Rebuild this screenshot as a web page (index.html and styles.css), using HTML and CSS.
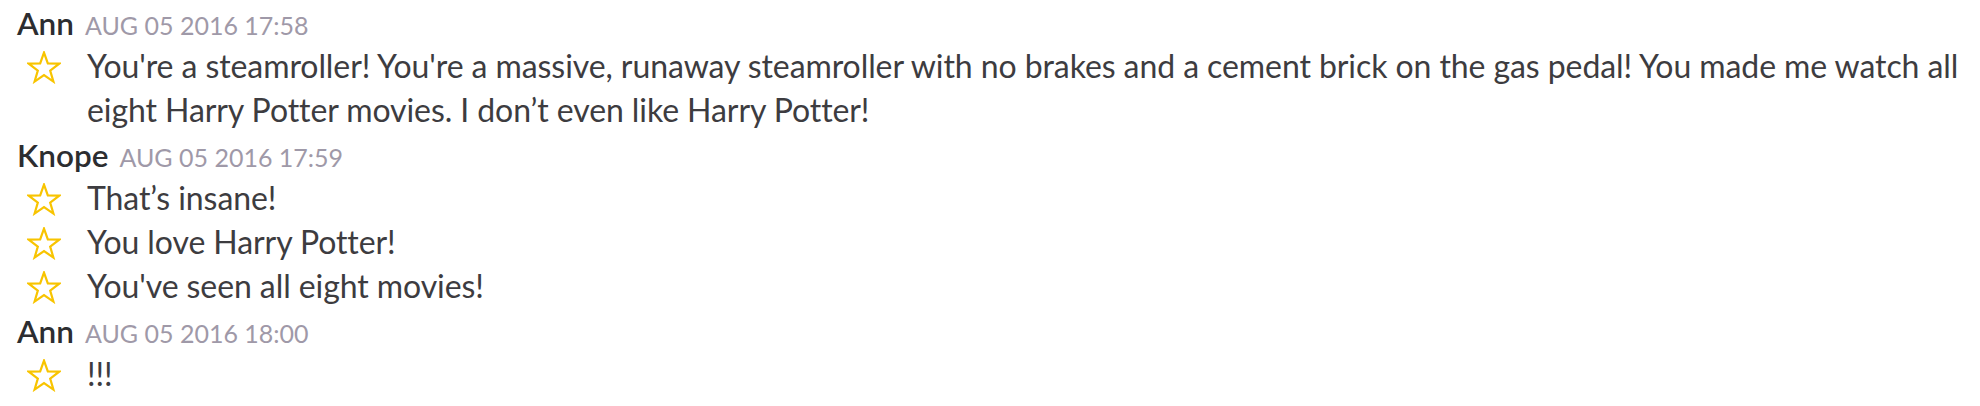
FILE: index.html
```html
<!DOCTYPE html>
<html lang="en">
<head>
<meta charset="utf-8">
<title>Chat log</title>
<link rel="stylesheet" href="styles.css">
</head>
<body>
<div class="log">
  <div class="head"><span class="name">Ann</span><span class="time">AUG 05 2016 17:58</span></div>
  <div class="msg">
    <svg class="star" viewBox="0 0 34 33" width="34" height="33"><polygon points="17,1.6 20.82,12.34 32.22,12.66 23.18,19.61 26.4,30.54 17,24.1 7.6,30.54 10.82,19.61 1.78,12.66 13.18,12.34"/></svg>
    <div class="text">You're a steamroller! You're a massive, runaway steamroller with no brakes and a cement brick on the gas pedal! You made me watch all eight Harry Potter movies. I don’t even like Harry Potter!</div>
  </div>
  <div class="head"><span class="name">Knope</span><span class="time">AUG 05 2016 17:59</span></div>
  <div class="msg">
    <svg class="star" viewBox="0 0 34 33" width="34" height="33"><polygon points="17,1.6 20.82,12.34 32.22,12.66 23.18,19.61 26.4,30.54 17,24.1 7.6,30.54 10.82,19.61 1.78,12.66 13.18,12.34"/></svg>
    <div class="text">That’s insane!</div>
  </div>
  <div class="msg">
    <svg class="star" viewBox="0 0 34 33" width="34" height="33"><polygon points="17,1.6 20.82,12.34 32.22,12.66 23.18,19.61 26.4,30.54 17,24.1 7.6,30.54 10.82,19.61 1.78,12.66 13.18,12.34"/></svg>
    <div class="text">You love Harry Potter!</div>
  </div>
  <div class="msg">
    <svg class="star" viewBox="0 0 34 33" width="34" height="33"><polygon points="17,1.6 20.82,12.34 32.22,12.66 23.18,19.61 26.4,30.54 17,24.1 7.6,30.54 10.82,19.61 1.78,12.66 13.18,12.34"/></svg>
    <div class="text">You've seen all eight movies!</div>
  </div>
  <div class="head"><span class="name">Ann</span><span class="time">AUG 05 2016 18:00</span></div>
  <div class="msg">
    <svg class="star" viewBox="0 0 34 33" width="34" height="33"><polygon points="17,1.6 20.82,12.34 32.22,12.66 23.18,19.61 26.4,30.54 17,24.1 7.6,30.54 10.82,19.61 1.78,12.66 13.18,12.34"/></svg>
    <div class="text">!!!</div>
  </div>
</div>
</body>
</html>
```

FILE: styles.css
```css
html, body {
  margin: 0;
  padding: 0;
  background: #ffffff;
}

body {
  font-family: Lato, "Liberation Sans", sans-serif;
  color: #2c2d30;
}

.log {
  padding: 0 8px 0 17px;
}

.head {
  box-sizing: border-box;
  height: 44px;
  padding-top: 1px;
  line-height: 43px;
  font-size: 32px;
  white-space: nowrap;
}

.name {
  font-size: 31.5px;
  font-weight: 600;
  color: #2c2d30;
}

.time {
  margin-left: 11px;
  font-size: 25px;
  color: #9f99a8;
}

.msg {
  display: grid;
  grid-template-columns: 60px 1fr;
  padding-left: 10px;
}

.star {
  display: block;
  margin-top: 7px;
  fill: none;
  stroke: #f8c400;
  stroke-width: 2.2;
  stroke-linejoin: miter;
}

.text {
  font-size: 32px;
  line-height: 44px;
  letter-spacing: -0.08px;
  color: #3d3c40;
}
```
